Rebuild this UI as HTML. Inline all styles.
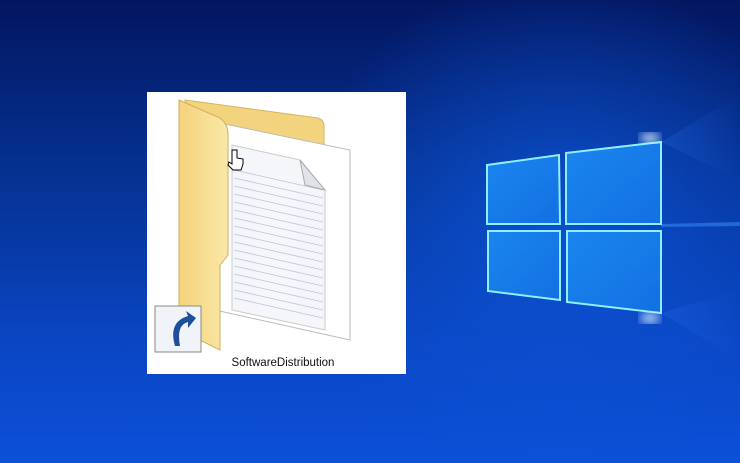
<!DOCTYPE html>
<html><head><meta charset="utf-8"><style>
html,body{margin:0;padding:0;width:740px;height:463px;overflow:hidden;background:#0a2a8a}
</style></head><body>
<svg width="740" height="463" viewBox="0 0 740 463" xmlns="http://www.w3.org/2000/svg">
<defs>
<linearGradient id="bgv" x1="0" y1="0" x2="0" y2="1">
<stop offset="0" stop-color="#031660"/><stop offset="0.35" stop-color="#05308f"/><stop offset="0.75" stop-color="#0a46c4"/><stop offset="1" stop-color="#0c50d8"/></linearGradient>
<radialGradient id="glowbg" cx="560" cy="230" r="260" gradientUnits="userSpaceOnUse">
<stop offset="0" stop-color="#0d55d8" stop-opacity="0.8"/><stop offset="1" stop-color="#0d55d8" stop-opacity="0"/></radialGradient>
<linearGradient id="pane" x1="0" y1="0" x2="1" y2="1"><stop offset="0" stop-color="#1a86ee"/><stop offset="1" stop-color="#1370e2"/></linearGradient>
<linearGradient id="fold" x1="0" y1="0" x2="1" y2="0"><stop offset="0" stop-color="#f3d27a"/><stop offset="1" stop-color="#fae8a8"/></linearGradient>
<linearGradient id="beam" x1="0" y1="0" x2="1" y2="0"><stop offset="0" stop-color="#2a70f0" stop-opacity="0.25"/><stop offset="1" stop-color="#2a70f0" stop-opacity="0"/></linearGradient>
<filter id="b6"><feGaussianBlur stdDeviation="5"/></filter>
</defs>
<rect width="740" height="463" fill="url(#bgv)"/>
<rect width="740" height="463" fill="url(#glowbg)"/>
<polygon points="661,142 740,95 740,180" fill="url(#beam)"/>
<polygon points="661,313 740,360 740,290" fill="url(#beam)"/>
<polygon points="661,224 740,222 740,226 661,227" fill="#3a90ff" opacity="0.5"/>
<g>
<polygon points="487,165 559,155 560,224 487,224" fill="url(#pane)"/>
<polygon points="566,153 661,142 661,224 566,224" fill="url(#pane)"/>
<polygon points="488,231 560,231 560,300 488,291" fill="url(#pane)"/>
<polygon points="567,231 661,231 661,313 567,302" fill="url(#pane)"/>
<g fill="none" stroke="#8ef0ff" stroke-width="2">
<polygon points="487,165 559,155 560,224 487,224"/>
<polygon points="566,153 661,142 661,224 566,224"/>
<polygon points="488,231 560,231 560,300 488,291"/>
<polygon points="567,231 661,231 661,313 567,302"/>
</g>
<ellipse cx="650" cy="138" rx="10" ry="5" fill="#cfe8ff" filter="url(#b6)"/>
<ellipse cx="650" cy="318" rx="10" ry="5" fill="#cfe8ff" filter="url(#b6)"/>
</g>
<rect x="147" y="92" width="259" height="282" fill="#fff"/>
<path d="M185 100 L318 118 Q324 120 324 126 L324 180 L190 180 Z" fill="#f3d47e" stroke="#d7b45c"/>
<polygon points="215,122 350,150 350,340 215,310" fill="#fff" stroke="#bbb"/>
<polygon points="232,145 300,160 325,190 325,330 232,310" fill="#f4f6fa" stroke="#ccc"/>
<g stroke="#b8c4d8" stroke-width="0.8">
<line x1="234" y1="170" x2="323" y2="190"/><line x1="234" y1="178" x2="323" y2="198"/><line x1="234" y1="186" x2="323" y2="206"/><line x1="234" y1="194" x2="323" y2="214"/><line x1="234" y1="202" x2="323" y2="222"/><line x1="234" y1="210" x2="323" y2="230"/><line x1="234" y1="218" x2="323" y2="238"/><line x1="234" y1="226" x2="323" y2="246"/><line x1="234" y1="234" x2="323" y2="254"/><line x1="234" y1="242" x2="323" y2="262"/><line x1="234" y1="250" x2="323" y2="270"/><line x1="234" y1="258" x2="323" y2="278"/><line x1="234" y1="266" x2="323" y2="286"/><line x1="234" y1="274" x2="323" y2="294"/><line x1="234" y1="282" x2="323" y2="302"/><line x1="234" y1="290" x2="323" y2="310"/><line x1="234" y1="298" x2="323" y2="318"/>
</g>
<polygon points="300,160 325,190 305,185" fill="#e0e4ea" stroke="#aaa"/>
<path d="M179 100 L220 118 Q228 124 228 135 L228 255 L220 265 L220 350 L179 330 Z" fill="url(#fold)" stroke="#d2ae58"/>
<path d="M232 150 l0 14 l-3 -2 l-1 3 l5 5 l8 0 l2 -6 l0 -5 l-6 -1 l0 -8 z" fill="#fff" stroke="#000" stroke-width="1"/>
<rect x="155" y="306" width="46" height="46" fill="#f0f4f8" stroke="#888"/>
<path d="M175 346 Q168 322 188 316 L186 311 L196 318 L188 328 L188 322 Q176 325 180 346 Z" fill="#1e4f9c"/>
<text x="283" y="366" font-family="Liberation Sans, sans-serif" font-size="11.5" text-anchor="middle" fill="#111">SoftwareDistribution</text>
</svg>
</body></html>
